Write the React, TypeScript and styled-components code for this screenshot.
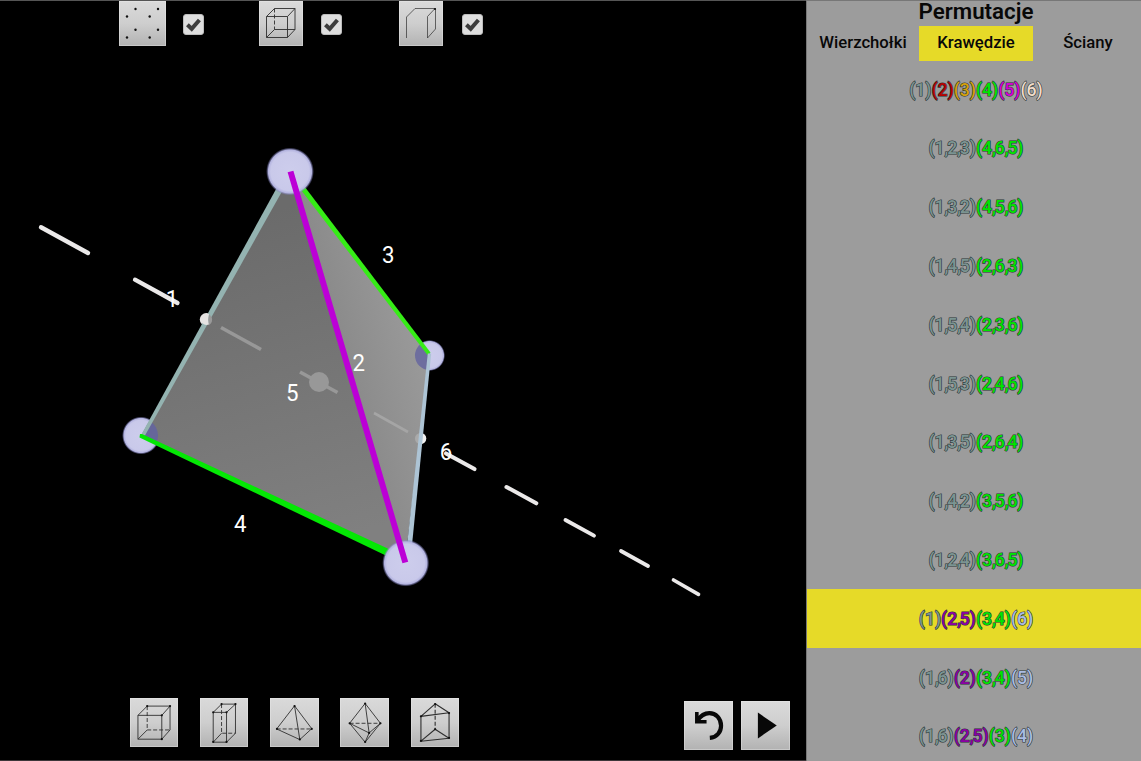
import React from "react";
import styled, { createGlobalStyle } from "styled-components";

const GlobalStyle = createGlobalStyle`
  * { box-sizing: border-box; }
  body { margin: 0; background: #000; overflow: hidden; font-family: Roboto, "Liberation Sans", sans-serif; }
  button { font: inherit; padding: 0; border: 0; }
`;

const Page = styled.div`
  display: grid;
  grid-template-columns: 806px 335px;
  grid-template-rows: 761px;
  width: 1141px;
  height: 761px;
  overflow: hidden;
`;

const Stage = styled.main`
  position: relative;
  display: flex;
  flex-direction: column;
  justify-content: space-between;
  background: #000;
  border-top: 1px solid #555;
  border-bottom: 1px solid #3c3639;
`;

const Scene = styled.svg`
  position: absolute;
  left: 0;
  top: -1px;
  width: 806px;
  height: 761px;
`;

const TopBar = styled.div`
  display: flex;
  position: relative;
  padding-left: 119px;
`;

const Toggle = styled.div<{ $width: number }>`
  display: flex;
  align-items: center;
  width: ${(p) => p.$width}px;
  height: 45px;
`;

const BottomBar = styled.div`
  display: flex;
  position: relative;
  justify-content: space-between;
  align-items: flex-start;
  height: 62px;
  padding: 0 16px 0 129.5px;
`;

const Group = styled.div<{ $gap: number; $drop?: number }>`
  display: flex;
  gap: ${(p) => p.$gap}px;
  padding-top: ${(p) => p.$drop ?? 0}px;
`;

const IconButton = styled.button<{ $w?: number; $h?: number }>`
  display: block;
  flex: none;
  width: ${(p) => p.$w ?? 48.7}px;
  height: ${(p) => p.$h ?? 49}px;
  background: linear-gradient(#dadada, #cecece 50%, #b2b2b2);
  box-shadow: inset 0 0 0 1px rgba(235, 235, 235, 0.4);
  svg {
    display: block;
    width: 100%;
    height: 100%;
    overflow: visible;
  }
`;

const CheckBox = styled.span<{ $gap: number }>`
  display: block;
  width: 21px;
  height: 21px;
  margin: 1px 0 0 ${(p) => p.$gap}px;
  border-radius: 3px;
  border: 1px solid #bcbcbc;
  background: #dedede;
  svg { display: block; }
`;

const Panel = styled.aside`
  display: flex;
  flex-direction: column;
  overflow: hidden;
  background: #9c9c9c;
  border-left: 1px solid #777;
  border-top: 1px solid #777;
  color: #080808;
`;

const Title = styled.h1`
  margin: 0;
  flex: none;
  height: 25px;
  line-height: 21px;
  font-size: 22.3px;
  font-weight: 600;
  text-align: center;
  padding-left: 4px;
`;

const Tabs = styled.div`
  display: grid;
  flex: none;
  grid-template-columns: 112px 114px 110px;
  height: 34.6px;
`;

const Tab = styled.button<{ $active?: boolean }>`
  background: ${(p) => (p.$active ? "#e6da28" : "transparent")};
  color: #080808;
  font-size: 16.7px;
  font-weight: 500;
  line-height: 34px;
`;

const List = styled.ul`
  margin: -0.3px 0 0;
  padding: 0;
  list-style: none;
`;

const Row = styled.li<{ $active?: boolean }>`
  display: flex;
  justify-content: center;
  align-items: center;
  height: 58.8px;
  padding-left: 4px;
  background: ${(p) => (p.$active ? "#e6da28" : "transparent")};
`;

const Cycle = styled.span<{ $color: string }>`
  color: ${(p) => p.$color};
  font-size: 17.6px;
  font-weight: 500;
  -webkit-text-stroke: 1.2px #2a3636;
  paint-order: stroke fill;
`;

const Comma = styled.span`
  margin-right: -1.3px;
`;

const GREY = "#7b9492";
const GREEN = "#00e400";
const PURPLE = "#8b00a5";
const BLUE = "#a9bce4";

type Part = [string, string];

const rows: Part[][] = [
  [["(1)", GREY], ["(2)", "#b50000"], ["(3)", "#d6a00a"], ["(4)", GREEN], ["(5)", "#d800d8"], ["(6)", "#f0dcca"]],
  [["(1,2,3)", GREY], ["(4,6,5)", GREEN]],
  [["(1,3,2)", GREY], ["(4,5,6)", GREEN]],
  [["(1,4,5)", GREY], ["(2,6,3)", GREEN]],
  [["(1,5,4)", GREY], ["(2,3,6)", GREEN]],
  [["(1,5,3)", GREY], ["(2,4,6)", GREEN]],
  [["(1,3,5)", GREY], ["(2,6,4)", GREEN]],
  [["(1,4,2)", GREY], ["(3,5,6)", GREEN]],
  [["(1,2,4)", GREY], ["(3,6,5)", GREEN]],
  [["(1)", GREY], ["(2,5)", PURPLE], ["(3,4)", GREEN], ["(6)", BLUE]],
  [["(1,6)", GREY], ["(2)", PURPLE], ["(3,4)", GREEN], ["(5)", BLUE]],
  [["(1,6)", GREY], ["(2,5)", PURPLE], ["(3)", GREEN], ["(4)", BLUE]],
];

const CycleText = ({ part }: { part: Part }) => (
  <Cycle $color={part[1]}>
    {part[0].split(",").map((chunk, i, all) => (
      <React.Fragment key={i}>
        {chunk}
        {i < all.length - 1 && <Comma>,</Comma>}
      </React.Fragment>
    ))}
  </Cycle>
);

const Check = ({ gap }: { gap: number }) => (
  <CheckBox $gap={gap}>
    <svg width="19" height="19" viewBox="0 0 19 19">
      <path d="M3.4 9.8 L7.7 13.8 L15.4 5" fill="none" stroke="#3c3c3c" strokeWidth="4" />
    </svg>
  </CheckBox>
);

const Wire = ({ solid, dashed, dots = [], width = 0.9, vb = "0 0 49 49", dotSize = 1.1 }: {
  solid: string; dashed?: string; dots?: number[][]; width?: number; vb?: string; dotSize?: number;
}) => (
  <svg viewBox={vb} fill="none" stroke="#2e2e2e" strokeWidth={width} strokeLinejoin="round">
    <path d={solid} />
    {dashed && <path d={dashed} strokeDasharray="4 2" />}
    {dots.map(([x, y]) => (
      <circle key={`${x},${y}`} cx={x} cy={y} r={dotSize} fill="#111" stroke="none" />
    ))}
  </svg>
);

const pointDots = [[16.5, 8], [8, 15.5], [30.7, 15.5], [39, 8], [16.5, 28.7], [39, 28.7], [8, 36.5], [30.7, 36.5]];

const outerDashes = [
  [41, 227.3, 88, 253], [135, 279.7, 177.5, 303], [446, 453.5, 474.5, 469],
  [506.5, 487, 536.3, 503.3], [565.5, 520, 594, 535.6], [621, 551, 648, 566], [673.5, 580, 698.5, 594.3],
];
const innerDashes = [[221, 327.5, 261, 349.5], [300, 372, 337.5, 392.5], [374, 413, 408, 432]];

const labels: [string, number, number][] = [
  ["1", 172, 307], ["2", 358.8, 371], ["3", 388.2, 263.3], ["4", 240.2, 532], ["5", 292.3, 401], ["6", 446, 460],
];

const Polyhedron = () => (
  <Scene viewBox="0 0 806 761">
    <defs>
      <radialGradient id="ball">
        <stop offset="0" stopColor="#cdcdec" />
        <stop offset="0.8" stopColor="#c9c9ea" />
        <stop offset="0.9" stopColor="#b4b4e0" />
        <stop offset="1" stopColor="#6a6ab0" stopOpacity="0" />
      </radialGradient>
      <linearGradient id="left" gradientUnits="userSpaceOnUse" x1="240" y1="220" x2="330" y2="540">
        <stop offset="0" stopColor="#6b6b6b" />
        <stop offset="1" stopColor="#808080" />
      </linearGradient>
      <linearGradient id="right" gradientUnits="userSpaceOnUse" x1="320" y1="380" x2="430" y2="350">
        <stop offset="0" stopColor="#858585" />
        <stop offset="1" stopColor="#9b9b9b" />
      </linearGradient>
      <clipPath id="body"><path d="M290 171 L141 436 L405 562 L430 354 Z" /></clipPath>
    </defs>
    <circle cx="141" cy="435.5" r="19" fill="url(#ball)" />
    <circle cx="429.5" cy="355.5" r="15.6" fill="url(#ball)" />
    <circle cx="206.3" cy="319.5" r="6.5" fill="#e5e3e2" />
    <circle cx="420.5" cy="438.5" r="5.8" fill="#f1f1f1" />
    <path d="M290 171 L141 436 L405 562 Z" fill="url(#left)" />
    <path d="M290 171 L405 562 L430 354 Z" fill="url(#right)" />
    <g clipPath="url(#body)">
      <circle cx="141" cy="435.5" r="17" fill="#66669a" />
      <circle cx="429.5" cy="355.5" r="14.5" fill="#6e6e9e" />
      <circle cx="420.5" cy="438.5" r="5.5" fill="#aaa" />
      {innerDashes.map(([x1, y1, x2, y2], i) => (
        <line key={i} x1={x1} y1={y1} x2={x2} y2={y2} stroke={i === 2 ? "#a5a5a5" : "#989898"} strokeWidth={i === 2 ? 2.6 : 3.6} />
      ))}
      <circle cx="319" cy="382" r="10" fill="#989898" />
    </g>
    {outerDashes.map(([x1, y1, x2, y2], i) => (
      <line key={i} x1={x1} y1={y1} x2={x2} y2={y2} stroke="#ebe9e9" strokeWidth={4.4 - i * 0.12} strokeLinecap="round" />
    ))}
    <path d="M286 171 L293.5 171 L145 435.5 L140 437 Z" fill="#94b3b1" />
    <path d="M200.5 320 a6.3 6.3 0 0 1 8.5 -6 q-1.5 5.5 0 10.5 a6.3 6.3 0 0 1 -8.5 -4.5" fill="#e5e3e2" />
    <path d="M209 314.5 a6 6 0 0 1 0 10.5 q-1.5 -5 0 -10.5" fill="#999" />
    <path d="M288 173 L292 170 L430.5 352.5 L427.5 355 Z" fill="#36ec16" />
    <path d="M427.8 353.5 L431.2 353.5 L411.5 550 L406.5 550 Z" fill="#adc4d5" />
    <path d="M140 434 L142 434 L393 551 L390 557.5 L139.5 437.5 Z" fill="#04e804" />
    <circle cx="290" cy="171.5" r="24" fill="url(#ball)" />
    <circle cx="405.7" cy="563" r="23.6" fill="url(#ball)" />
    <line x1="290.5" y1="171.5" x2="405.3" y2="562.5" stroke="#bc00d6" strokeWidth="6" />
    <g fill="#fff" fontSize="24" textAnchor="middle">
      {labels.map(([text, x, y]) => (
        <text key={text} x={x} y={y} textLength="12.5" lengthAdjust="spacingAndGlyphs">{text}</text>
      ))}
    </g>
  </Scene>
);

export default function App() {
  return (
    <Page>
      <GlobalStyle />
      <Stage>
        <Polyhedron />
        <TopBar>
          <Toggle $width={140}>
            <IconButton $w={47} $h={45} aria-label="Wierzchołki">
              <Wire vb="0 0 47 45" solid="" dots={pointDots} dotSize={1.2} />
            </IconButton>
            <Check gap={17} />
          </Toggle>
          <Toggle $width={140}>
            <IconButton $w={43.5} $h={45} aria-label="Krawędzie">
              <Wire vb="0 0 43.5 45" solid="M7.5 15.5H28.5V36.5H7.5Z L15.5 7.5H36V28.5L28.5 36.5 M28.5 15.5L36 7.5 M7.5 36.5L15.5 28.5H36" dashed="M15.5 7.5V28.5" />
            </IconButton>
            <Check gap={18.5} />
          </Toggle>
          <Toggle $width={100}>
            <IconButton $w={43.5} $h={45} aria-label="Ściany">
              <Wire vb="0 0 43.5 45" width={0.7} solid="M7.5 37V16L16 7.5H36.5V28L28.5 37V15.5L36 7.5" dots={[[36, 8]]} />
            </IconButton>
            <Check gap={19} />
          </Toggle>
        </TopBar>
        <BottomBar>
          <Group $gap={21.6}>
            <IconButton aria-label="Sześcian">
              <Wire solid="M8 17.3H32V41.3H8Z L17.3 8H40.3V32L32 41.3 M32 17.3L40.3 8 M8 41.3L17.3 32" dashed="M17.3 8V32H40.3" dots={[[17.3, 8], [40.3, 8], [32, 17.3], [32, 41.3]]} />
            </IconButton>
            <IconButton aria-label="Graniastosłup">
              <Wire solid="M13.3 14.3H26.7V44.3H13.3Z L21.7 6H35.7V35.3L26.7 44.3 M26.7 14.3L35.7 6 M13.3 44.3L21.7 35.3" dashed="M21.7 6V35.3H35.7" dots={[[21.7, 6], [35.7, 6], [13.3, 14.3], [26.7, 14.3], [13.3, 44], [26.7, 44]]} />
            </IconButton>
            <IconButton aria-label="Czworościan">
              <Wire solid="M24.7 7.7L6.7 31L30 41.7L42 30.7Z L30 41.7" dashed="M6.7 31H42" dots={[[24.7, 8], [7, 31], [30, 41.5], [42, 31]]} />
            </IconButton>
            <IconButton aria-label="Ośmiościan">
              <Wire solid="M25.3 5.3L9.7 25.3L25.3 44.3L40.7 25.3Z L29.3 35 M9.7 25.3L29.3 35L40.7 25.3 M25.3 44.3L29.3 35" dashed="M9.7 25.3H40.7" dots={[[25.3, 5.5], [9.7, 25.3], [40.7, 25.3], [29.3, 35], [25.3, 44]]} />
            </IconButton>
            <IconButton aria-label="Graniastosłup trójkątny">
              <Wire solid="M24.3 5.7L10 18.3L38.3 14.7Z M10 18.3V43.3L38.3 40.3V14.7 M10 43.3L24.3 31.3L38.3 40.3" dashed="M24.3 5.7V31.3" width={1.1} dots={[[24.3, 6], [10, 18.3], [38.3, 15], [24.3, 31.3], [10, 43], [38.3, 40]]} />
            </IconButton>
          </Group>
          <Group $gap={8.5} $drop={3}>
            <IconButton aria-label="Cofnij">
              <svg viewBox="0 0 49 49" fill="none" stroke="#080808">
                <path d="M26 37 C33.5 36.5 37.3 30.5 37.3 24.7 C37.3 17.3 32 12 25.5 12 C20.5 12 16.5 15 13.5 19.5" strokeWidth="4.2" />
                <path d="M12.9 11V20.7H22.7" strokeWidth="3.6" />
              </svg>
            </IconButton>
            <IconButton aria-label="Odtwórz">
              <svg viewBox="0 0 49 49"><path d="M17 11.5L36 24.5L17 37.5Z" fill="#080808" /></svg>
            </IconButton>
          </Group>
        </BottomBar>
      </Stage>
      <Panel>
        <Title>Permutacje</Title>
        <Tabs>
          <Tab>Wierzchołki</Tab>
          <Tab $active>Krawędzie</Tab>
          <Tab>Ściany</Tab>
        </Tabs>
        <List>
          {rows.map((parts, i) => (
            <Row key={i} $active={i === 9}>
              {parts.map((part, j) => <CycleText key={j} part={part} />)}
            </Row>
          ))}
        </List>
      </Panel>
    </Page>
  );
}
